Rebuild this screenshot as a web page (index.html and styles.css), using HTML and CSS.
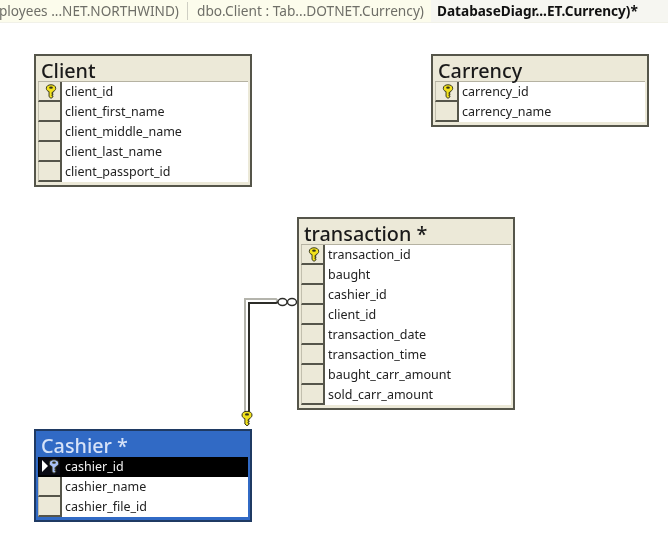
FILE: index.html
```html
<!DOCTYPE html>
<html lang="en">
<head>
<meta charset="utf-8">
<title>Database Diagram</title>
<link rel="stylesheet" href="styles.css">
</head>
<body>
<svg width="0" height="0" class="defs">
  <defs>
    <symbol id="key" viewBox="0 0 12 16">
      <path d="M6 .8C3 .8 1 2.300 1 4.500c0 1.800 1.100 3 2.900 3.600V13.500L6 15.300l2.100-1.600V12.600H7V11.400H8.100V10.300H7V9.200H8.100V8.100C9.900 7.500 11 6.300 11 4.500 11 2.300 9 .8 6 .8z" fill="currentColor" stroke="#33331a" stroke-width="1"/>
      <ellipse cx="6" cy="3.900" rx="2" ry="1.200" fill="#33331a"/>
    </symbol>
  </defs>
</svg>
<div class="tabs">
  <span class="tab tab-first">ployees ...NET.NORTHWIND)</span>
  <span class="tab tab-second">dbo.Client : Tab...DOTNET.Currency)</span>
  <span class="tab tab-active">DatabaseDiagr...ET.Currency)*</span>
</div>
<main class="canvas">
  <svg class="links" width="668" height="517" viewBox="0 0 668 517">
    <path d="M278 278L276 276H245V392" class="link-light"/>
    <path d="M278 279L276 280H249V392" class="link-dark"/>
    <ellipse cx="282.500" cy="279" rx="4.500" ry="3.500" class="crow"/>
    <ellipse cx="292" cy="279" rx="4.500" ry="3.500" class="crow"/>
    <svg x="241" y="386" width="12" height="19" class="key-gold"><use href="#key"/></svg>
  </svg>

  <section class="table t-client">
    <h2 class="title">Client</h2>
    <div class="rows">
      <div class="row"><span class="gut"><svg class="key key-gold"><use href="#key"/></svg></span><span class="cell">client_id</span></div>
      <div class="row"><span class="gut"></span><span class="cell">client_first_name</span></div>
      <div class="row"><span class="gut"></span><span class="cell">client_middle_name</span></div>
      <div class="row"><span class="gut"></span><span class="cell">client_last_name</span></div>
      <div class="row"><span class="gut"></span><span class="cell">client_passport_id</span></div>
    </div>
  </section>

  <section class="table t-currency">
    <h2 class="title">Carrency</h2>
    <div class="rows">
      <div class="row"><span class="gut"><svg class="key key-gold"><use href="#key"/></svg></span><span class="cell">carrency_id</span></div>
      <div class="row"><span class="gut"></span><span class="cell">carrency_name</span></div>
    </div>
  </section>

  <section class="table t-transaction">
    <h2 class="title">transaction *</h2>
    <div class="rows">
      <div class="row"><span class="gut"><svg class="key key-gold"><use href="#key"/></svg></span><span class="cell">transaction_id</span></div>
      <div class="row"><span class="gut"></span><span class="cell">baught</span></div>
      <div class="row"><span class="gut"></span><span class="cell">cashier_id</span></div>
      <div class="row"><span class="gut"></span><span class="cell">client_id</span></div>
      <div class="row"><span class="gut"></span><span class="cell">transaction_date</span></div>
      <div class="row"><span class="gut"></span><span class="cell">transaction_time</span></div>
      <div class="row"><span class="gut"></span><span class="cell">baught_carr_amount</span></div>
      <div class="row"><span class="gut"></span><span class="cell">sold_carr_amount</span></div>
    </div>
  </section>

  <section class="table t-cashier selected">
    <h2 class="title">Cashier *</h2>
    <div class="rows">
      <div class="row row-on"><span class="gut"><span class="arrow"></span><svg class="key key-blue"><use href="#key"/></svg></span><span class="cell">cashier_id</span></div>
      <div class="row"><span class="gut"></span><span class="cell">cashier_name</span></div>
      <div class="row"><span class="gut"></span><span class="cell">cashier_file_id</span></div>
    </div>
  </section>
</main>
</body>
</html>
```
FILE: styles.css
```css
* { box-sizing: border-box; }
html, body { margin: 0; padding: 0; background: #fff; }
body {
  width: 668px;
  height: 540px;
  overflow: hidden;
  font-family: "Noto Sans", "Liberation Sans", sans-serif;
  color: #1c1c1c;
}
.defs { position: absolute; }

.tabs {
  display: flex;
  align-items: center;
  height: 23px;
  background: #fcfcec;
  border-bottom: 1px solid #f1f1e8;
  font-size: 13.600px;
  white-space: nowrap;
  overflow: hidden;
  filter: blur(0.3px);
}
.tab { color: #6f6f68; line-height: 22px; }
.tab-first {
  flex: 0 0 189px;
  margin-left: -1px;
  border-right: 1px solid #cfcfc4;
  line-height: 18px;
}
.tab-second { flex: 0 0 243px; padding-left: 9px; font-size: 13.700px; }
.tab-active {
  flex: 1;
  padding-left: 6px;
  background: #f6f6f1;
  color: #111;
  font-weight: 700;
}

.canvas { position: relative; width: 668px; height: 517px; filter: blur(0.3px); }
.links { position: absolute; left: 0; top: 0; }
.link-light { fill: none; stroke: #b4b4ac; stroke-width: 2; }
.link-dark { fill: none; stroke: #2c2c28; stroke-width: 2; }
.crow { fill: #fff; stroke: #2c2c28; stroke-width: 1.400; }
.key-gold { color: #f2e21c; }
.key-blue { color: #a9c0f8; }

.table {
  position: absolute;
  width: 218px;
  padding: 0 2px 3px;
  background: #ece9d8;
  border: 2px solid #55554a;
}
.t-client { left: 34px; top: 31px; }
.t-currency { left: 431px; top: 31px; }
.t-transaction { left: 297px; top: 194px; }
.t-cashier { left: 34px; top: 406px; }
.selected { background: #316ac5; border-color: #1f3a63; }

.title {
  margin: 0;
  height: 26px;
  padding: 4px 0 0 3px;
  font-size: 19.800px;
  line-height: 21px;
  font-weight: 500;
  color: #1a1a1a;
  border-bottom: 1px solid #b5b2a2;
  white-space: nowrap;
}
.selected .title { color: #d6e2f8; border-bottom-color: #316ac5; }

.rows { background: #fff; }
.row { display: flex; height: 20px; }
.gut {
  position: relative;
  display: flex;
  align-items: center;
  justify-content: center;
  flex: 0 0 24px;
  padding-left: 2px;
  background: #ece9d8;
  border-left: 1px solid #c2bfae;
  border-bottom: 2px solid #55554a;
  border-right: 2px solid #55554a;
}
.cell {
  flex: 1;
  padding-left: 3px;
  font-size: 12.500px;
  line-height: 19px;
  color: #222;
  white-space: nowrap;
}
.key { width: 12px; height: 15px; display: block; }
.row-on { background: #000; }
.row-on .gut { background: #0a0a14; border-color: #000; justify-content: flex-end; padding-right: 0; }
.row-on .cell { color: #f2f2f2; }
.arrow {
  position: absolute;
  left: 3px;
  top: 3px;
  border-left: 6px solid #fff;
  border-top: 6px solid transparent;
  border-bottom: 6px solid transparent;
}
```
